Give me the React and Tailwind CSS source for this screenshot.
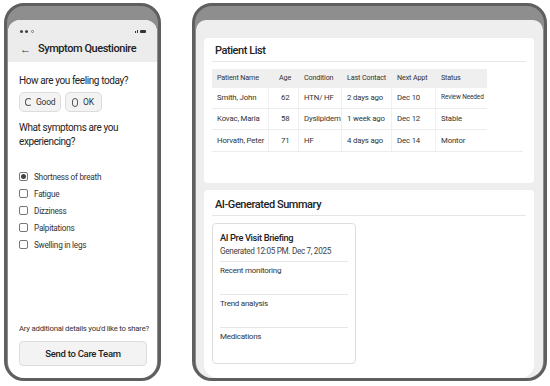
import React from "react";

const font = { fontFamily: "Roboto, 'Liberation Sans', sans-serif" };

function Check({ checked, label }) {
  return (
    <div className="flex items-center h-[17px] gap-[6px]">
      <div className="w-[9px] h-[9px] rounded-[2px] border border-[#777] bg-white flex items-center justify-center">
        {checked && <div className="w-[5px] h-[5px] rounded-full bg-[#444]" />}
      </div>
      <span className="text-[8.2px] tracking-[-0.03em] text-[#333] leading-[10px]">{label}</span>
    </div>
  );
}

function Phone() {
  return (
    <div className="w-[157px] h-[378px] mt-[3px] ml-[4px] rounded-[20px] border-[3px] border-[#5f5f5f] bg-[#8e8e8e] pt-[14px] px-[1px] pb-0 flex flex-col">
      <div className="flex-1 bg-white rounded-t-[12px] rounded-b-[16px] overflow-hidden flex flex-col">
        <div className="bg-[#ececec] h-[42px] flex flex-col px-[11px]">
          <div className="h-[18px] flex items-center justify-between pt-[4px]">
            <div className="flex items-center gap-[2px] pl-[1px]">
              <div className="w-[3px] h-[3px] rounded-full bg-[#444]" />
              <div className="w-[3px] h-[3px] rounded-full bg-[#444]" />
              <div className="w-[3px] h-[3px] rounded-full border border-[#777] ml-[1px]" />
            </div>
            <div className="flex items-center gap-[2px]">
              <div className="flex items-end gap-[1px] h-[4px]">
                <div className="w-[1px] h-[2px] bg-[#333]" />
                <div className="w-[1px] h-[3px] bg-[#333]" />
              </div>
              <div className="w-[6px] h-[3px] bg-[#333] rounded-[1px]" />
            </div>
          </div>
          <div className="flex items-center h-[22px] gap-[7px] pl-[1px]">
            <span className="text-[11px] text-[#333] leading-none">←</span>
            <span className="text-[11px] tracking-[-0.04em] font-medium text-[#222] whitespace-nowrap leading-[12px]">Symptom Questionire</span>
          </div>
        </div>
        <div className="px-[11px] pt-[12px] flex flex-col flex-1">
          <div className="text-[10px] tracking-[-0.04em] text-[#222] leading-[13px] whitespace-nowrap">How are you feeling today?</div>
          <div className="flex gap-[4px] mt-[5px]">
            <div className="h-[20px] w-[42px] rounded-[5px] border border-[#dcdcdc] bg-[#f3f3f3] flex items-center pl-[5px] gap-[4px]">
              <div className="w-[7px] h-[8px] rounded-full border border-[#555] border-r-transparent" />
              <span className="text-[8.5px] tracking-[-0.03em] text-[#333] leading-[10px]">Good</span>
            </div>
            <div className="h-[20px] w-[37px] rounded-[5px] border border-[#dcdcdc] bg-[#f3f3f3] flex items-center pl-[6px] gap-[5px]">
              <div className="w-[6px] h-[9px] rounded-full border border-[#555]" />
              <span className="text-[8.5px] text-[#333] leading-[10px]">OK</span>
            </div>
          </div>
          <div className="text-[10px] tracking-[-0.04em] text-[#222] leading-[14px] mt-[9px] whitespace-nowrap">
            What symptoms are you<br />experiencing?
          </div>
          <div className="flex flex-col mt-[19px]">
            <Check checked label="Shortness of breath" />
            <Check label="Fatigue" />
            <Check label="Dizziness" />
            <Check label="Palpitations" />
            <Check label="Swelling in legs" />
          </div>
          <div className="flex-1" />
          <div className="text-[7.8px] tracking-[-0.03em] text-[#333] leading-[12px] whitespace-nowrap">Ary additional details you'd like to share?</div>
          <div className="mt-[6px] mb-[12px] h-[25px] w-[128px] rounded-[4px] border border-[#dcdcdc] bg-[#f3f3f3] flex items-center justify-center">
            <span className="text-[9.5px] tracking-[-0.03em] font-medium text-[#222] leading-[10px]">Send to Care Team</span>
          </div>
        </div>
      </div>
    </div>
  );
}

const cols = [57, 30, 43, 50, 44, 51];
const rows = [
  ["Smith, John", "62", "HTN/ HF", "2 days ago", "Dec 10", "Review Needed"],
  ["Kovac, Maria", "58", "Dyslipidemia", "1 week ago", "Dec 12", "Stable"],
  ["Horvath, Peter", "71", "HF", "4 days ago", "Dec 14", "Montor"],
];
const head = ["Patient Name", "Age", "Condition", "Last Contact", "Next Appt", "Status"];

function Table() {
  return (
    <div className="border-b border-[#ececec] w-[311px]">
      <div className="flex w-[275px] h-[19px] bg-[#efefef]">
        {head.map((h, i) => (
          <div
            key={h}
            style={{ width: cols[i] }}
            className={`flex items-center text-[7.2px] tracking-[-0.02em] text-[#333] whitespace-nowrap overflow-hidden ${i === 1 ? "pl-[10px]" : "pl-[5px]"}`}
          >
            {h}
          </div>
        ))}
      </div>
      {rows.map((r, ri) => (
        <div key={ri} className={`flex w-[275px] h-[21px] ${ri < 2 ? "border-b border-[#ececec]" : ""}`}>
          {r.map((c, i) => (
            <div
              key={i}
              style={{ width: cols[i] }}
              className={`flex items-center whitespace-nowrap overflow-hidden text-[#333] ${i < 5 ? "border-r border-[#f0f0f0]" : ""} ${i === 5 && ri === 0 ? "text-[6.5px] tracking-[-0.02em]" : "text-[7.8px] tracking-[-0.02em]"} ${i === 1 ? "pl-[12px]" : "pl-[5px]"}`}
            >
              {c}
            </div>
          ))}
        </div>
      ))}
    </div>
  );
}

function Section({ label, last }) {
  return (
    <div className={`h-[33px] pt-[4px] text-[8px] tracking-[-0.03em] leading-[10px] text-[#333] ${last ? "" : "border-b border-[#e6e6e6]"}`}>
      {label}
    </div>
  );
}

function Tablet() {
  return (
    <div className="w-[355px] h-[378px] mt-[3px] ml-[31px] rounded-[20px] border-[3px] border-[#5f5f5f] bg-[#8e8e8e] pt-[14px] px-[1px] flex flex-col">
      <div className="flex-1 bg-[#eeeeee] rounded-t-[10px] rounded-b-[16px] overflow-hidden flex flex-col pl-[8px] pr-[9px] pt-[18px]">
        <div className="h-[145px] bg-white rounded-[4px] px-[8px] pt-[6px]">
          <div className="text-[11px] tracking-[-0.04em] font-medium text-[#222] leading-[14px] pl-[3px]">Patient List</div>
          <div className="h-px bg-[#e6e6e6] mt-[3px]" />
          <div className="mt-[7px]">
            <Table />
          </div>
        </div>
        <div className="flex-1 bg-white rounded-t-[4px] rounded-b-[14px] mt-[7px] px-[8px] pt-[8px]">
          <div className="text-[11px] tracking-[-0.04em] font-medium text-[#222] leading-[14px] pl-[3px]">AI-Generated Summary</div>
          <div className="h-px bg-[#e6e6e6] mt-[3px]" />
          <div className="mt-[7px] w-[144px] h-[141px] border border-[#dedede] rounded-[4px] px-[7px] pt-[8px]">
            <div className="text-[9.3px] tracking-[-0.04em] font-medium text-[#222] leading-[12px]">AI Pre Visit Briefing</div>
            <div className="text-[8.2px] tracking-[-0.04em] text-[#444] leading-[12px] mt-[1px] whitespace-nowrap">Generated 12:05 PM. Dec 7, 2025</div>
            <div className="h-px bg-[#e6e6e6] mt-[4px]" />
            <Section label="Recent monitoring" />
            <Section label="Trend analysis" />
            <Section label="Medications" last />
          </div>
        </div>
      </div>
    </div>
  );
}

export default function App() {
  return (
    <div className="w-[550px] h-[386px] bg-white flex" style={font}>
      <Phone />
      <Tablet />
    </div>
  );
}
